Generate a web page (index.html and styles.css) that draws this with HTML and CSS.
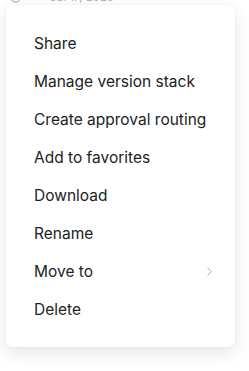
FILE: index.html
```html
<!DOCTYPE html>
<html>
<head>
<meta charset="utf-8">
<link rel="stylesheet" href="styles.css">
</head>
<body>
<div class="page">
  <div class="meta">
    <svg class="clock" width="11" height="11" viewBox="0 0 12 12"><circle cx="6" cy="6" r="5" fill="none" stroke="#b5b5b5" stroke-width="1.2"/></svg>
    <span class="meta-text">Jul 17, 2025</span>
  </div>
  <ul class="menu">
    <li class="item">Share</li>
    <li class="item">Manage version stack</li>
    <li class="item">Create approval routing</li>
    <li class="item">Add to favorites</li>
    <li class="item">Download</li>
    <li class="item">Rename</li>
    <li class="item has-sub">Move to
      <svg class="chev" width="5" height="9" viewBox="0 0 5 9"><path d="M0.6 0.6 L4.3 4.5 L0.6 8.4" fill="none" stroke="#a8a8a8" stroke-width="1"/></svg>
    </li>
    <li class="item">Delete</li>
  </ul>
</div>
</body>
</html>
```
FILE: styles.css
```css
html, body {
  margin: 0;
  padding: 0;
  background: #fff;
}
body {
  font-family: Inter, "Noto Sans", sans-serif;
  width: 249px;
  height: 371px;
  overflow: hidden;
}
.page {
  position: relative;
  display: flow-root;
  width: 249px;
  height: 371px;
}
.meta {
  display: flex;
  align-items: center;
  padding-left: 10px;
  margin-top: -10px;
  height: 14px;
  color: #b5b5b5;
  font-size: 11.5px;
}
.meta-text {
  margin-left: 29px;
}
.menu {
  position: absolute;
  left: 6px;
  top: 5px;
  width: 229px;
  margin: 0;
  padding: 19px 0;
  list-style: none;
  background: #fff;
  border-radius: 6px;
  box-shadow: 0 6px 18px rgba(0, 0, 0, 0.10), 0 0 3px rgba(0, 0, 0, 0.05);
  box-sizing: border-box;
  height: 342px;
}
.item {
  height: 38px;
  display: flex;
  align-items: center;
  justify-content: space-between;
  padding: 0 23px 0 28px;
  font-size: 15.5px;
  color: #222;
}
.chev {
  display: block;
}
```
